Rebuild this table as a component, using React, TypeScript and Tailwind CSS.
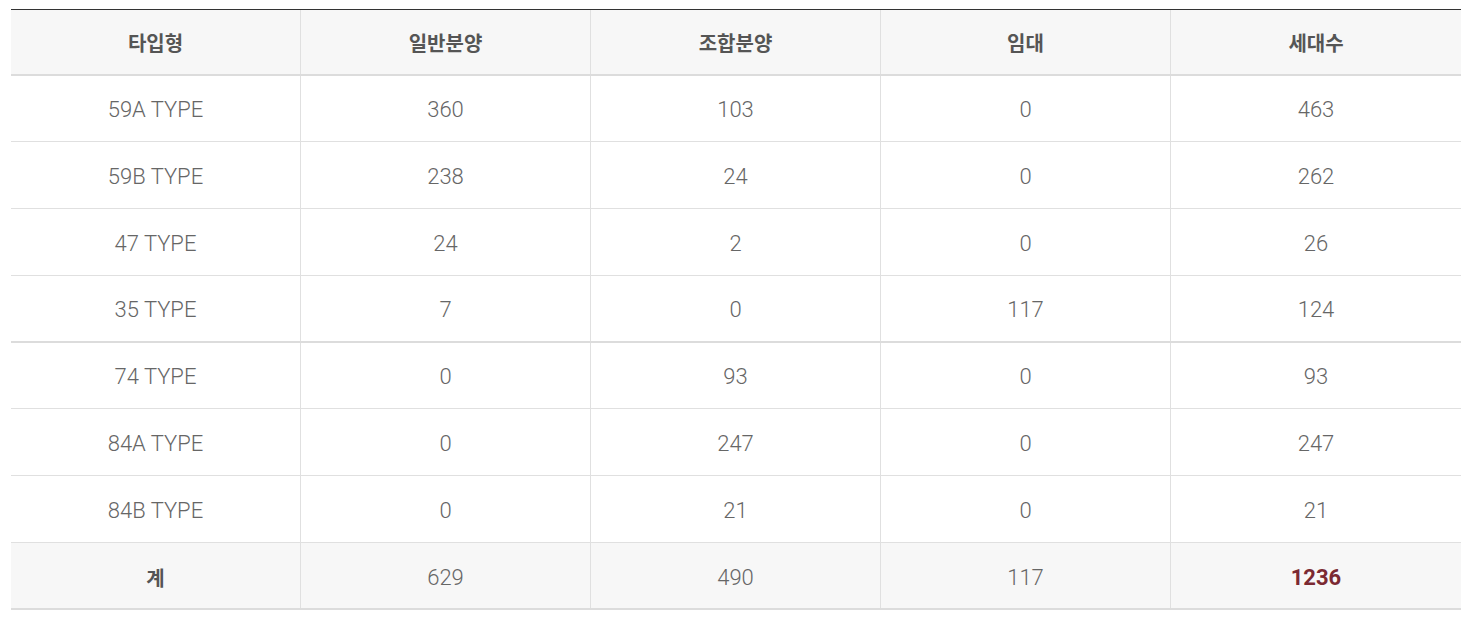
import React from 'react';

type Row = { type: string; general: number; union: number; rent: number; total: number; h: string; thick?: boolean };

const rows: Row[] = [
  { type: '59A TYPE', general: 360, union: 103, rent: 0, total: 463, h: 'h-[66px]' },
  { type: '59B TYPE', general: 238, union: 24, rent: 0, total: 262, h: 'h-[67px]' },
  { type: '47 TYPE', general: 24, union: 2, rent: 0, total: 26, h: 'h-[67px]' },
  { type: '35 TYPE', general: 7, union: 0, rent: 117, total: 124, h: 'h-[67px]', thick: true },
  { type: '74 TYPE', general: 0, union: 93, rent: 0, total: 93, h: 'h-[66px]' },
  { type: '84A TYPE', general: 0, union: 247, rent: 0, total: 247, h: 'h-[67px]' },
  { type: '84B TYPE', general: 0, union: 21, rent: 0, total: 21, h: 'h-[67px]' },
];

const headers = ['타입형', '일반분양', '조합분양', '임대', '세대수'];

const cell = 'flex items-center justify-center pt-[2px] border-r border-[#e0e0e0] last:border-r-0';
const num = "font-['Roboto',sans-serif] font-light text-[22px] text-[#666]";
const head = "font-['Noto_Sans_CJK_KR',sans-serif] font-bold text-[20px] text-[#555]";

export default function App() {
  return (
    <div className="bg-white min-h-[617px] pt-[9px] pl-[11px]">
      <div className="w-[1450px] border-t border-[#333]">
        <div className="grid grid-cols-5 h-[66px] bg-[#f7f7f7] border-b-2 border-[#dcdcdc]">
          {headers.map((h) => (
            <div key={h} className={`${cell} ${head}`}>
              {h}
            </div>
          ))}
        </div>
        {rows.map((r) => (
          <div
            key={r.type}
            className={`grid grid-cols-5 ${r.h} ${r.thick ? 'border-b-2 border-[#dcdcdc]' : 'border-b border-[#e0e0e0]'}`}
          >
            <div className={`${cell} ${num}`}>{r.type}</div>
            <div className={`${cell} ${num}`}>{r.general}</div>
            <div className={`${cell} ${num}`}>{r.union}</div>
            <div className={`${cell} ${num}`}>{r.rent}</div>
            <div className={`${cell} ${num}`}>{r.total}</div>
          </div>
        ))}
        <div className="grid grid-cols-5 h-[67px] bg-[#f7f7f7] border-b-2 border-[#dcdcdc]">
          <div className={`${cell} pt-[4px] ${head}`}>계</div>
          <div className={`${cell} pt-[4px] ${num}`}>629</div>
          <div className={`${cell} pt-[4px] ${num}`}>490</div>
          <div className={`${cell} pt-[4px] ${num}`}>117</div>
          <div className={`${cell} pt-[4px] font-['Roboto',sans-serif] font-bold text-[22px] text-[#7b2a32]`}>1236</div>
        </div>
      </div>
    </div>
  );
}
